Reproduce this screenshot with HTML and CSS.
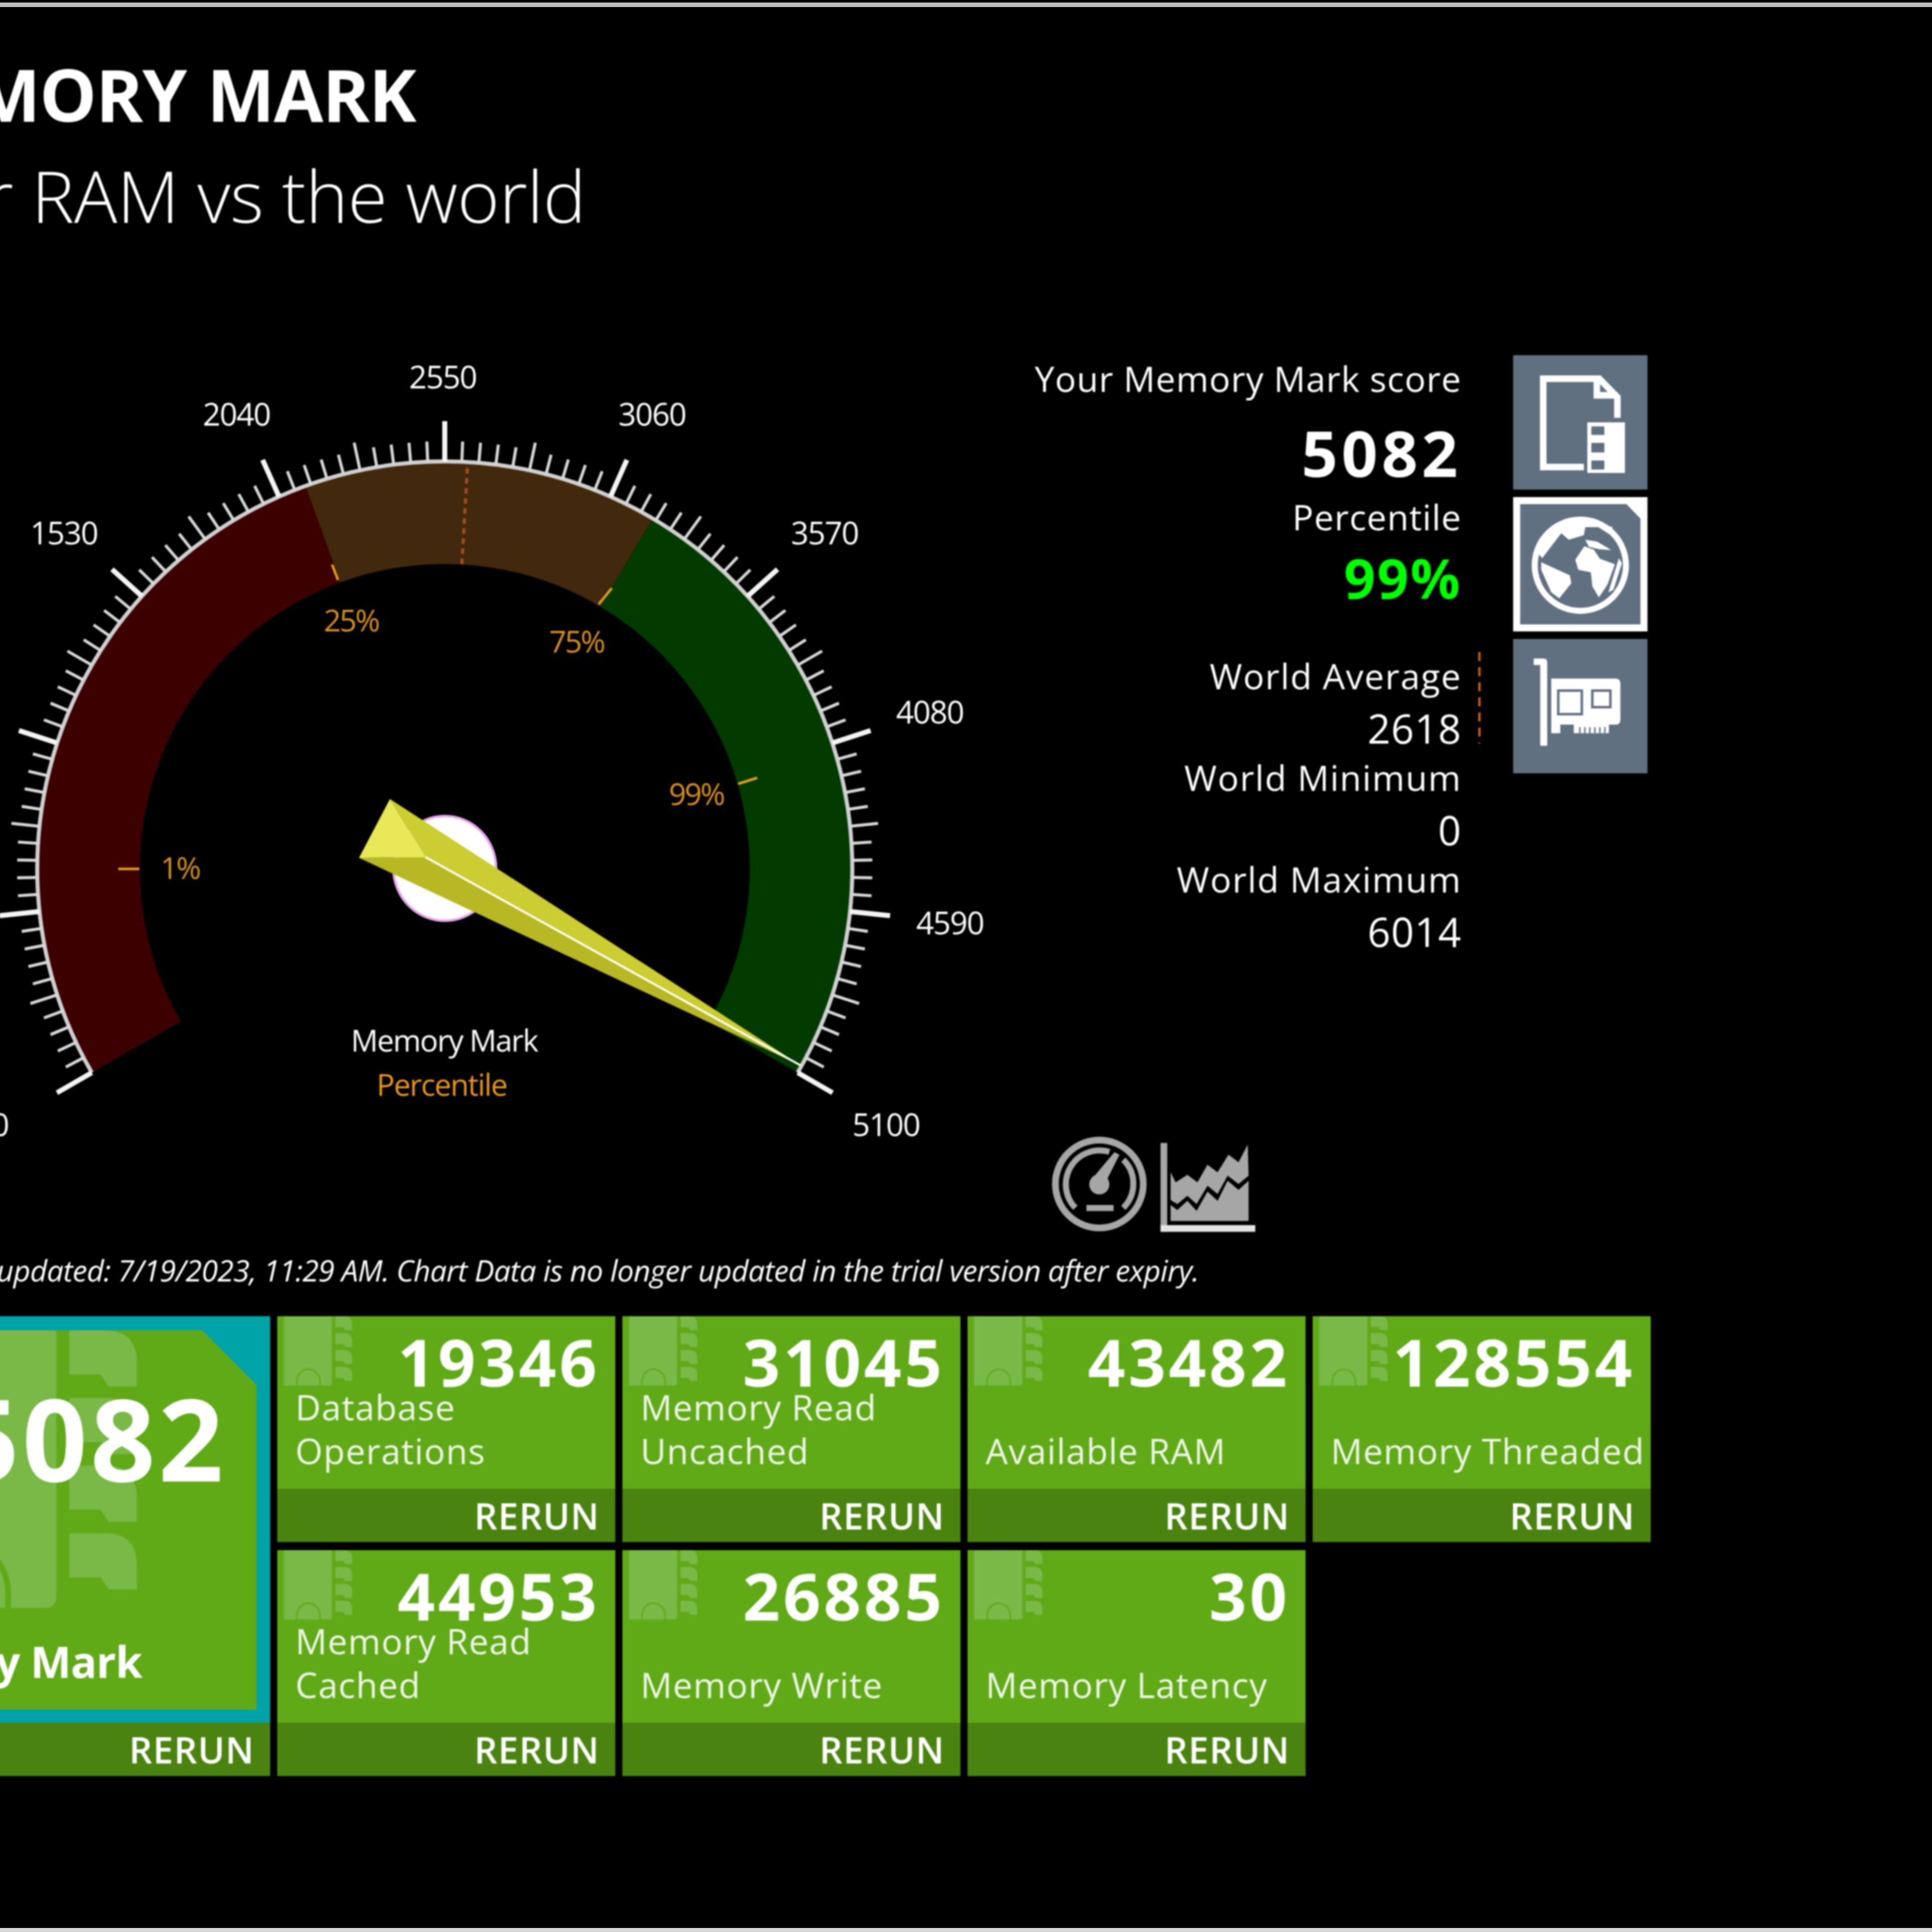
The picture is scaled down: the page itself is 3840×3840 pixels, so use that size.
FILE: index.html
```html
<!DOCTYPE html>
<html>
<head>
    <title>Memory Mark</title>
    <link rel="stylesheet" href="styles.css">
</head>
<body>
    <svg class="defs">
        <symbol id="ramIcon" viewBox="0 0 34 35">
            <path d="M0 0H24V33Q24 34.5 22.5 34.5H0Z"/>
            <path class="ram-arch" d="M6.5 34.5V32A5.8 6.5 0 0 1 18 32V34.5"/>
            <path d="M25.6 0H30Q34 0 34 4V7H30.5L29.5 5.5H25.6Z"/>
            <path d="M25.6 8.4H30Q34 8.4 34 12.4V15.4H30.5L29.5 13.9H25.6Z"/>
            <path d="M25.6 16.8H30Q34 16.8 34 20.8V23.8H30.5L29.5 22.3H25.6Z"/>
            <path d="M25.6 25.2H30Q34 25.2 34 29.2V32.2H30.5L29.5 30.7H25.6Z"/>
        </symbol>
    </svg>

    <div class="app">
        <h1 class="title">MEMORY MARK</h1>
        <h2 class="subtitle">Your RAM vs the world</h2>

        <div class="main-row">
            <svg class="gauge" viewBox="-821 700 2871 1780">
                <path class="band band-red" d="M270.9 2081A708 708 0 0 1 641.9 1061.7"/>
                <path class="band band-brown" d="M641.9 1061.7A708 708 0 0 1 1245.4 1118.2"/>
                <path class="band band-green" d="M1245.4 1118.2A708 708 0 0 1 1497.1 2081"/>
                <path class="rim" d="M182.5 2132A810 810 0 1 1 1585.5 2132"/>
                <g id="ticks"></g>

                <line class="avg-line" x1="918" y1="1121" x2="929" y2="930"/>
                <line class="pct-tick" x1="235" y1="1727" x2="277" y2="1727"/>
                <line class="pct-tick" x1="660" y1="1122" x2="672" y2="1153"/>
                <line class="pct-tick" x1="1190" y1="1201" x2="1216" y2="1169"/>
                <line class="pct-tick" x1="1467" y1="1558" x2="1505" y2="1546"/>

                <text class="scale-label" x="0" y="2258">0</text>
                <text class="scale-label" x="-124" y="1857">510</text>
                <text class="scale-label" x="-85" y="1438">1020</text>
                <text class="scale-label" x="127" y="1082">1530</text>
                <text class="scale-label" x="470" y="846">2040</text>
                <text class="scale-label" x="880" y="772">2550</text>
                <text class="scale-label" x="1296" y="846">3060</text>
                <text class="scale-label" x="1639" y="1082">3570</text>
                <text class="scale-label" x="1848" y="1438">4080</text>
                <text class="scale-label" x="1888" y="1857">4590</text>
                <text class="scale-label" x="1761" y="2258">5100</text>

                <text class="pct-label" x="358" y="1747">1%</text>
                <text class="pct-label" x="698" y="1255">25%</text>
                <text class="pct-label" x="1146" y="1297">75%</text>
                <text class="pct-label" x="1384" y="1600">99%</text>

                <text class="gauge-name" x="883" y="2090">Memory Mark</text>
                <text class="gauge-unit" x="878" y="2178">Percentile</text>

                <ellipse class="hub" cx="884" cy="1726" rx="102" ry="104"/>
                <polygon class="needle-top" points="775,1588 845.5,1703.6 1592,2118"/>
                <polygon class="needle-low" points="713.5,1705 845.5,1703.6 1592,2118"/>
                <polygon class="needle-tail" points="775,1588 713.5,1705 845.5,1703.6"/>
                <line class="needle-line" x1="845.5" y1="1703.6" x2="1592" y2="2118"/>
            </svg>

            <div class="panel">
                <div class="panel-top">
                    <div class="stats">
                        <div class="stat-name">Your Memory Mark score</div>
                        <div class="stat-score">5082</div>
                        <div class="stat-name stat-pct-name">Percentile</div>
                        <div class="stat-pct">99%</div>
                        <div class="stat-avg">
                            <div class="stat-name stat-world">World Average</div>
                            <div class="stat-value">2618</div>
                        </div>
                        <div class="stat-name stat-world stat-next">World Minimum</div>
                        <div class="stat-value">0</div>
                        <div class="stat-name stat-world stat-next">World Maximum</div>
                        <div class="stat-value">6014</div>
                    </div>

                    <div class="side-btns">
                        <svg class="side-btn" viewBox="0 0 268 268">
                            <rect class="btn-bg" width="268" height="268"/>
                            <path class="btn-line" d="M141 223H60V47H172L208 84V125"/>
                            <path class="btn-line" d="M167 47V80H208"/>
                            <path class="btn-white" fill-rule="evenodd" d="M148 134H223V235H148ZM156 142V159H182V142ZM156 175V194H182V175ZM156 210V228H182V210Z"/>
                        </svg>
                        <svg class="side-btn" viewBox="0 0 268 268">
                            <rect class="btn-white" width="268" height="268"/>
                            <polygon class="btn-bg" points="14,14 226,14 254,43 254,254 14,254"/>
                            <circle class="btn-ring" cx="134" cy="136" r="91"/>
                            <path class="btn-white" d="M58 122L96 72L111 85L141 76L144 60L170 60L198 78L198 60L134 41L75 60L48 110Z"/>
                            <path class="btn-white" d="M144 85L168 89L196 106L171 104L151 99Z"/>
                            <path class="btn-white" d="M124 125L142 98L161 105L173 123L203 134L188 175L171 200L158 178L155 150L130 145Z"/>
                            <path class="btn-white" d="M56 130L113 156L116 172L92 202L76 190L56 145Z"/>
                            <path class="btn-white" d="M211 122L217 132L200 185L190 190Z"/>
                        </svg>
                        <svg class="side-btn" viewBox="0 0 268 268">
                            <rect class="btn-bg" width="268" height="268"/>
                            <path class="btn-white" d="M41 39H60Q68 39 68 47V213H54V52H41Z"/>
                            <path class="btn-white" d="M76 79H204Q214 79 214 89V161Q214 171 204 171H191V188H121V171H94V188H76Z"/>
                            <rect class="btn-hole" x="90" y="103" width="47" height="47"/>
                            <rect class="btn-hole" x="158" y="103" width="36" height="33"/>
                            <path class="btn-teeth" d="M133 176V188M143 176V188M153 176V188M163 176V188M173 176V188M183 176V188"/>
                        </svg>
                    </div>
                </div>

                <svg class="view-icons" viewBox="0 0 1500 750">
                    <circle class="ico-stroke" cx="405" cy="370" r="262" stroke-width="40"/>
                    <path class="ico-stroke" d="M262 512A202 202 0 0 1 465 178" stroke-width="36"/>
                    <path class="ico-stroke" d="M548 225A202 202 0 0 1 548 512" stroke-width="36"/>
                    <circle class="ico-fill" cx="405" cy="372" r="60"/>
                    <polygon class="ico-fill" points="365,335 495,180 525,195 450,345"/>
                    <rect class="ico-fill" x="328" y="495" width="162" height="36"/>
                    <rect class="ico-fill" x="770" y="125" width="40" height="530"/>
                    <rect class="ico-bright" x="770" y="615" width="565" height="40"/>
                    <polygon class="ico-fill" points="830,300 860,360 930,315 990,360 1050,255 1110,300 1175,195 1235,240 1290,135 1295,320 1235,370 1170,320 1110,430 1050,380 985,490 930,440 870,490 830,465"/>
                    <polygon class="ico-fill" points="830,495 870,525 930,470 985,530 1050,415 1110,470 1170,350 1235,405 1295,350 1295,590 830,590"/>
                </svg>
            </div>
        </div>

        <p class="note">Chart Data last updated: 7/19/2023, 11:29 AM. Chart Data is no longer updated in the trial version after expiry.</p>

        <div class="tiles">
            <div class="tile tile-big">
                <div class="big-body">
                    <div class="big-inner">
                        <svg class="ram-bg ram-bg-big"><use href="#ramIcon"/></svg>
                        <div class="big-score">5082</div>
                        <div class="big-name">Memory Mark</div>
                    </div>
                </div>
                <div class="rerun">RERUN</div>
            </div>

            <div class="tile">
                <div class="tile-body">
                    <svg class="ram-bg"><use href="#ramIcon"/></svg>
                    <div class="tile-num">19346</div>
                    <div class="tile-name">Database<br>Operations</div>
                </div>
                <div class="rerun">RERUN</div>
            </div>
            <div class="tile">
                <div class="tile-body">
                    <svg class="ram-bg"><use href="#ramIcon"/></svg>
                    <div class="tile-num">31045</div>
                    <div class="tile-name">Memory Read<br>Uncached</div>
                </div>
                <div class="rerun">RERUN</div>
            </div>
            <div class="tile">
                <div class="tile-body">
                    <svg class="ram-bg"><use href="#ramIcon"/></svg>
                    <div class="tile-num">43482</div>
                    <div class="tile-name">Available RAM</div>
                </div>
                <div class="rerun">RERUN</div>
            </div>
            <div class="tile">
                <div class="tile-body">
                    <svg class="ram-bg"><use href="#ramIcon"/></svg>
                    <div class="tile-num">128554</div>
                    <div class="tile-name">Memory Threaded</div>
                </div>
                <div class="rerun">RERUN</div>
            </div>
            <div class="tile">
                <div class="tile-body">
                    <svg class="ram-bg"><use href="#ramIcon"/></svg>
                    <div class="tile-num">44953</div>
                    <div class="tile-name">Memory Read<br>Cached</div>
                </div>
                <div class="rerun">RERUN</div>
            </div>
            <div class="tile">
                <div class="tile-body">
                    <svg class="ram-bg"><use href="#ramIcon"/></svg>
                    <div class="tile-num">26885</div>
                    <div class="tile-name">Memory Write</div>
                </div>
                <div class="rerun">RERUN</div>
            </div>
            <div class="tile">
                <div class="tile-body">
                    <svg class="ram-bg"><use href="#ramIcon"/></svg>
                    <div class="tile-num">30</div>
                    <div class="tile-name">Memory Latency</div>
                </div>
                <div class="rerun">RERUN</div>
            </div>
        </div>
    </div>

    <script src="script.js"></script>
</body>
</html>
```

FILE: styles.css
```css
html, body { margin: 0; background: #000; }
body { width: 3840px; height: 3840px; overflow: hidden; position: relative; font-family: "Open Sans", "Noto Sans", sans-serif; color: #fff; border-bottom: 8px solid #d8d8d8; box-sizing: border-box; }
body::before { content: ""; display: block; height: 9px; margin-top: 5px; background: #bdbdbd; }
.defs { display: none; }
.app { margin-left: -821px; width: 4661px; margin-top: -14px; filter: blur(1.4px); }

.title { width: 1647px; margin: 0; padding-top: 107px; font-size: 143px; line-height: 160px; font-weight: 700; text-align: right; letter-spacing: -2px; word-spacing: 6px; }
.subtitle { width: 1985px; margin: 41px 0 0; font-size: 143px; line-height: 160px; font-weight: 300; text-align: right; letter-spacing: -.5px; }

.main-row { display: flex; margin-top: 232px; }
.gauge { width: 2871px; height: 1780px; flex: none; }
.band { fill: none; stroke-width: 204px; }
.band-red { stroke: #3c0000; }
.band-brown { stroke: #42280c; }
.band-green { stroke: #023a00; }
.rim { fill: none; stroke: #d0d0d0; stroke-width: 8px; }
.tick-major { stroke: #f4f4f4; stroke-width: 10px; }
.tick-mid { stroke: #d8d8d8; stroke-width: 6px; }
.tick-minor { stroke: #d8d8d8; stroke-width: 6px; }
.avg-line { stroke: #a0521a; stroke-width: 6px; stroke-dasharray: 11 9; }
.pct-tick { stroke: #e0a020; stroke-width: 5px; }
.scale-label { fill: #fff; font-size: 62px; font-weight: 500; letter-spacing: -2px; text-anchor: middle; }
.pct-label { fill: #d8911f; font-size: 60px; font-weight: 500; letter-spacing: -3px; text-anchor: middle; }
.gauge-name { fill: #fff; font-size: 60px; font-weight: 500; letter-spacing: -2px; text-anchor: middle; }
.gauge-unit { fill: #e8961e; font-size: 60px; font-weight: 500; letter-spacing: -2px; text-anchor: middle; }
.hub { fill: #fff; stroke: #e6a8ea; stroke-width: 5px; }
.needle-top { fill: #cccc33; }
.needle-low { fill: #b8b824; }
.needle-tail { fill: #e8e858; }
.needle-line { stroke: #fff; stroke-width: 4px; }

.panel { width: 1225px; flex: none; }
.panel-top { display: flex; height: 1530px; }
.stats { width: 855px; padding-top: 2px; text-align: right; flex: none; }
.stat-name { font-size: 70px; line-height: 100px; font-weight: 500; letter-spacing: 1.1px; }
.stat-world { letter-spacing: 1.8px; }
.stat-score { font-size: 126px; line-height: 150px; font-weight: 700; margin-top: 22px; letter-spacing: 7.5px; }
.stat-pct-name { margin-top: 3px; }
.stat-pct { font-size: 110px; line-height: 130px; font-weight: 700; margin-top: 5px; color: #00ff00; letter-spacing: 3px; }
.stat-avg { position: relative; margin-top: 81px; }
.stat-avg::after { content: ""; position: absolute; right: -38px; top: 3px; width: 5px; height: 182px; background: repeating-linear-gradient(#c05a18 0 18px, transparent 18px 30px); }
.stat-value { font-size: 80px; line-height: 100px; margin-top: 4px; letter-spacing: 1px; }
.stat-next { margin-top: -2px; }

.side-btns { display: flex; flex-direction: column; gap: 15px; margin: 6px 0 0 102px; }
.side-btn { display: block; width: 268px; height: 267px; }
.btn-bg { fill: #607080; }
.btn-white { fill: #fff; }
.btn-line { fill: none; stroke: #fff; stroke-width: 13px; }
.btn-ring { fill: none; stroke: #fff; stroke-width: 12px; }
.btn-hole { fill: none; stroke: #607080; stroke-width: 5px; }
.btn-teeth { stroke: #607080; stroke-width: 3px; }

.view-icons { display: block; width: 500px; height: 250px; }
.ico-stroke { fill: none; stroke: #a6a6a6; }
.ico-fill { fill: #a6a6a6; }
.ico-bright { fill: #e4e4e4; }

.note { width: 3204px; margin: 4px 0 0; font-size: 59px; line-height: 80px; font-style: italic; font-weight: 500; text-align: right; letter-spacing: -.85px; }

.tiles { display: grid; grid-template-columns: repeat(6, 672px); grid-template-rows: 449px 449px; column-gap: 14px; row-gap: 16px; margin-top: 52px; }
.tile { display: flex; flex-direction: column; background: #60a917; }
.tile-body { position: relative; flex: 1; overflow: hidden; }
.ram-bg { position: absolute; left: 13px; top: 0; width: 136px; height: 140px; }
.ram-bg use { fill: #7ab847; }
.ram-arch { fill: none; stroke: #60a917; stroke-width: .7px; }
.tile-num { position: relative; padding: 25px 31px 0 0; font-size: 130px; line-height: 130px; font-weight: 700; text-align: right; letter-spacing: 6px; }
.tile-name { position: relative; display: flex; flex-direction: column; justify-content: flex-end; height: 174px; margin-top: -18px; padding-left: 36px; font-size: 70px; line-height: 87px; font-weight: 500; letter-spacing: 1.3px; color: #eef6e6; white-space: nowrap; }
.rerun { height: 106px; padding-right: 31px; background: #4a8310; font-size: 72px; line-height: 106px; font-weight: 600; text-align: right; letter-spacing: 1.5px; }

.tile-big { grid-column: span 2; grid-row: span 2; }
.big-body { flex: 1; padding: 28px 27px 26px 28px; background: #00a3a8; display: flex; }
.big-inner { position: relative; flex: 1; background: #60a917; clip-path: polygon(0 0, calc(100% - 108px) 0, 100% 109px, 100% 100%, 0 100%); overflow: hidden; }
.ram-bg-big { left: 521px; width: 544px; height: 560px; }
.big-score { position: relative; padding: 100px 60px 0 0; font-size: 226px; line-height: 226px; font-weight: 700; text-align: right; letter-spacing: 6px; }
.big-name { position: absolute; right: 228px; bottom: 41px; font-size: 86px; line-height: 110px; font-weight: 700; letter-spacing: -1px; }
```

FILE: script.js
```js
// scale marks for the gauge: 10 sections of 24 degrees, 10 marks in each
var cx = 884, cy = 1727, rim = 810;
var ticks = document.getElementById('ticks');

for (var i = 0; i <= 100; i++) {
    var deg = -120 + i * 2.4;
    var rad = deg * Math.PI / 180;
    var len = 40, cls = 'tick-minor';
    if (i % 10 === 0) { len = 80; cls = 'tick-major'; }
    else if (i % 5 === 0) { len = 56; cls = 'tick-mid'; }

    var line = document.createElementNS('http://www.w3.org/2000/svg', 'line');
    line.setAttribute('class', cls);
    line.setAttribute('x1', cx + rim * Math.sin(rad));
    line.setAttribute('y1', cy - rim * Math.cos(rad));
    line.setAttribute('x2', cx + (rim + len) * Math.sin(rad));
    line.setAttribute('y2', cy - (rim + len) * Math.cos(rad));
    ticks.appendChild(line);
}
```
